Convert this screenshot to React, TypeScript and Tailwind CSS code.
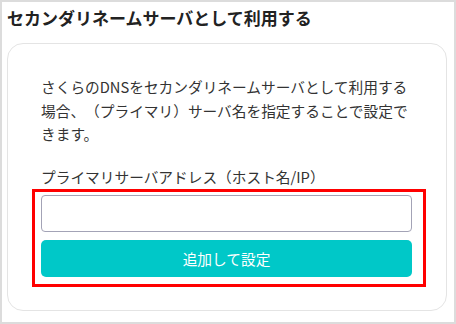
import React from "react";

export default function App() {
  return (
    <div
      className="relative w-[456px] h-[324px] border-2 border-[#dcdcdc] bg-white text-[#333] [text-spacing-trim:space-all]"
      style={{ fontFamily: '"Noto Sans CJK JP", "Noto Sans", sans-serif' }}
    >
      <div className="pl-[5px] pr-[7px] pt-[4px] pb-[11px] flex flex-col h-full">
        <h1 className="text-[17px] leading-[24px] font-bold text-[#222]">
          セカンダリネームサーバとして利用する
        </h1>
        <div className="mt-[13px] flex-1 border border-[#e4e4e4] rounded-[16px] pl-[33px] pr-[34px] pt-[31px]">
          <p className="text-[14.7px] leading-[23.5px] w-[372px]">
            さくらのDNSをセカンダリネームサーバとして利用する場合、（プライマリ）サーバ名を指定することで設定できます。
          </p>
          <div className="mt-[19.5px] text-[14.7px] leading-[23.5px]">
            プライマリサーバアドレス（ホスト名/IP）
          </div>
          <input
            type="text"
            className="mt-[6.5px] block w-[371px] h-[37px] border border-[#a3a3b6] rounded-[4px] bg-white outline-none"
          />
          <button
            type="button"
            className="mt-[8px] block w-[371px] h-[37px] rounded-[5px] bg-[#00c8c8] text-white text-[14.7px] leading-[37px] text-center"
          >
            追加して設定
          </button>
        </div>
      </div>
      <div className="absolute left-[30px] top-[187px] w-[394px] h-[98px] border-[3px] border-[#ff0000] pointer-events-none" />
    </div>
  );
}
